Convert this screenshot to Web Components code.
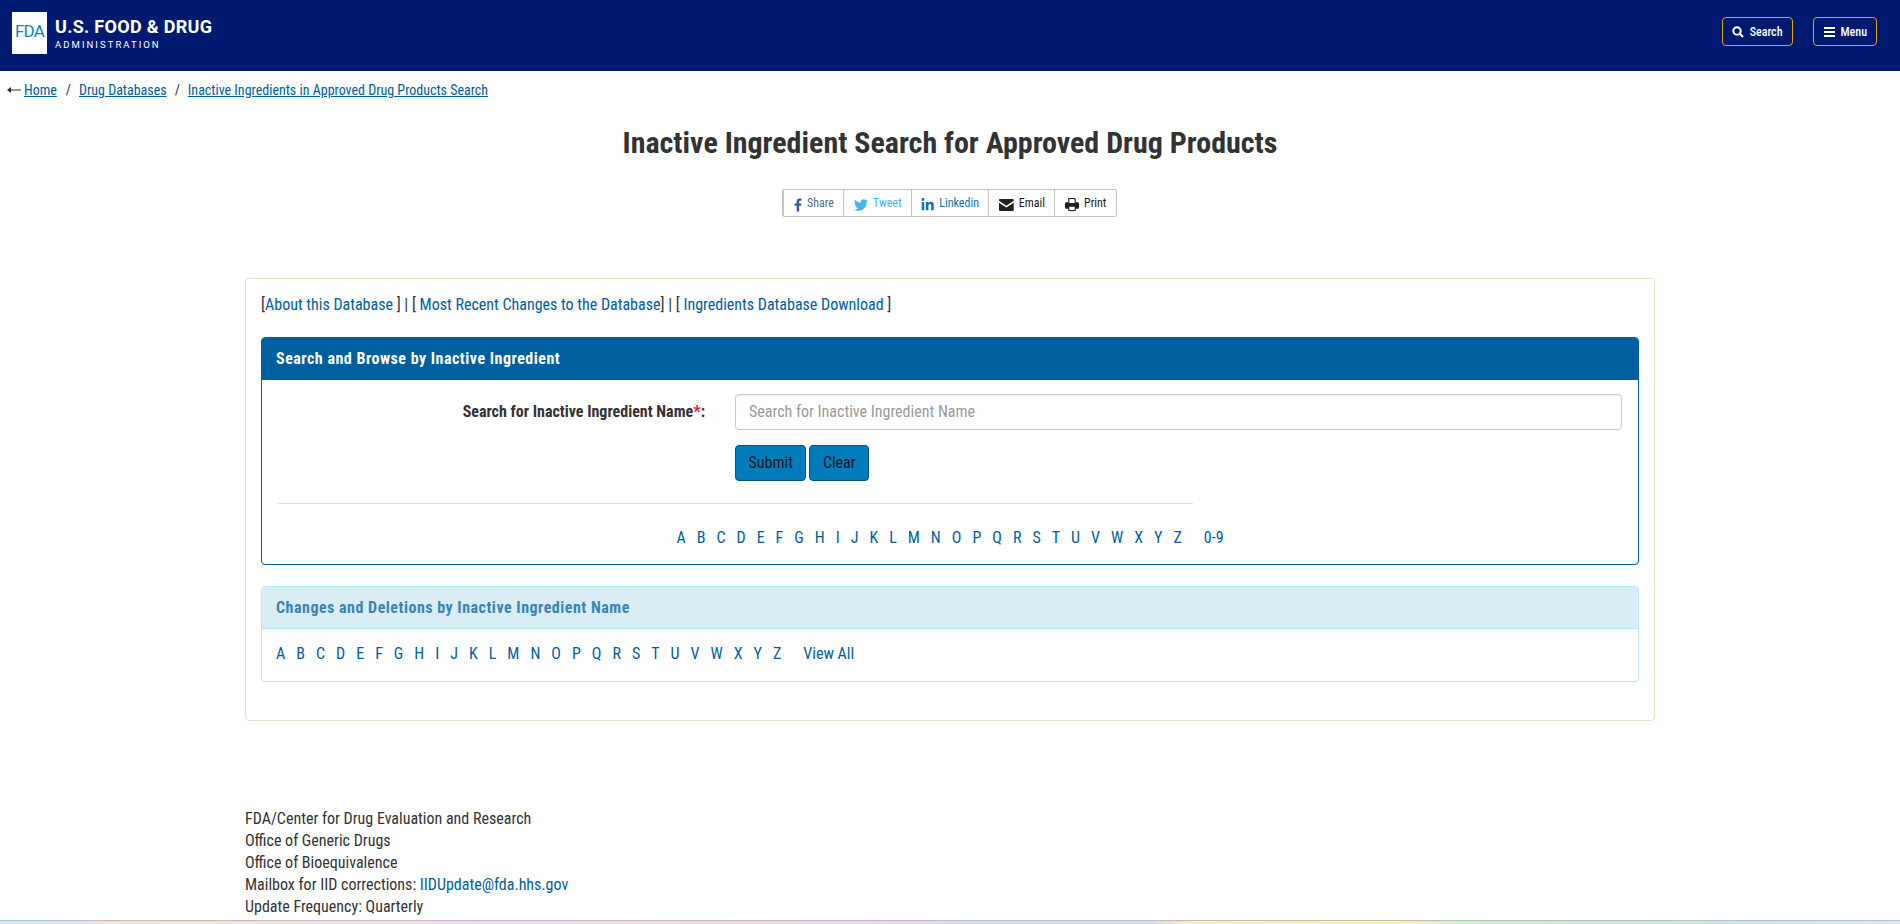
<!DOCTYPE html>
<html lang="en"><head><meta charset="utf-8"><title>Inactive Ingredient Search for Approved Drug Products</title>
<style>
  html, body { margin: 0; padding: 0; }
  body {
    background: #fff;
    color: #333;
    font: 16px/22px "Roboto Condensed", Roboto, "Liberation Sans", sans-serif;
    font-stretch: condensed;
    min-height: 100vh;
    display: flex;
    flex-direction: column;
    overflow: hidden;
  }
  rainbow-bar { margin-top: auto; }
</style>
</head><body>

<template id="fda-header-tpl">
  <style>
    :host { display: flex; justify-content: space-between; align-items: flex-start; height: 71px; background: #001a72; color: #fff; box-sizing: border-box; padding: 12px 23px 0 12px; }
    .brand { display: flex; gap: 8px; }
    .logo { width: 35px; height: 42px; background: #fff; display: flex; align-items: center; justify-content: center; color: #0a84c1; font: 400 17px/1 Roboto, sans-serif; letter-spacing: -.8px; padding: 0 0 4px 0; box-sizing: border-box; }
    .name { font: 700 18px/22px Roboto, sans-serif; letter-spacing: .3px; padding-top: 4px; white-space: nowrap; }
    .sub { font: 400 9.5px/12px Roboto, sans-serif; letter-spacing: 2.05px; margin-top: 1px; }
    .actions { display: flex; gap: 20px; padding-top: 5px; }
    .btn { display: flex; align-items: center; gap: 6px; height: 29px; box-sizing: border-box; border: 1px solid #dba80b; border-radius: 4px; padding: 0 9px 0 10px; font: 500 12px/1 "Roboto Condensed", Roboto, sans-serif; font-stretch: condensed; }
    .btn:first-child { padding-left: 9px; }
    svg { display: block; }
  </style>
  <div class="brand">
    <div class="logo">FDA</div>
    <div class="name">U.S. FOOD &amp; DRUG<div class="sub">ADMINISTRATION</div></div>
  </div>
  <div class="actions">
    <div class="btn"><svg width="12" height="12" viewBox="0 0 12 12" fill="none" stroke="#fff"><circle cx="5" cy="5" r="3.7" stroke-width="2"/><path d="M7.8 7.8 11 11" stroke-width="2.2"/></svg>Search</div>
    <div class="btn"><svg width="11" height="10" viewBox="0 0 11 10" fill="#fff"><rect width="11" height="2" y="0"/><rect width="11" height="2" y="4"/><rect width="11" height="2" y="8"/></svg>Menu</div>
  </div>
</template>

<template id="bread-crumbs-tpl">
  <style>
    :host { display: flex; align-items: center; height: 22px; padding: 8px 0 0 7px; font-size: 14px; color: #333; }
    a { color: #005ea2; text-decoration: underline; }
    .sep { margin: 0 8px; }
    .sep.first { margin-left: 9px; }
    svg { margin-right: 3px; }
  </style>
  <svg width="14" height="6" viewBox="0 0 14 6"><path d="M0 3 4 0v2.4h10v1.2H4V6z" fill="#3a2a25"/></svg>
  <a href="#">Home</a><span class="sep first">/</span>
  <a href="#">Drug Databases</a><span class="sep">/</span>
  <a href="#">Inactive Ingredients in Approved Drug Products Search</a>
</template>

<template id="share-bar-tpl">
  <style>
    :host { display: flex; width: max-content; margin: 30px 0 0 782px; height: 28px; box-sizing: border-box; border: 1px solid #c4c4c4; border-radius: 2px; font-size: 12px; line-height: 16px; }
    .item { display: flex; align-items: center; gap: 5px; padding: 0 9px 0; border-left: 1px solid #c4c4c4; box-sizing: border-box; }
    .item:first-child { border-left: 0; }
    svg { display: block; margin-top: 3px; }
    .fb { color: #56678f; width: 60px; padding-left: 10px; } .tw { color: #3db7ee; width: 68px; padding-left: 10px; } .li { color: #0a75b5; width: 77px; padding-left: 9px; } .em { width: 66px; padding-left: 10px; color: #212121; } .pr { width: 62px; padding-left: 10px; color: #212121; }
  </style>
  <div class="item fb"><svg width="9" height="14" viewBox="0 0 320 512"><path fill="#3b5998" d="M279.14 288l14.22-92.66h-88.91v-60.13c0-25.35 12.42-50.06 52.24-50.06h40.42V6.26S260.43 0 225.36 0c-73.22 0-121.08 44.38-121.08 124.72v70.62H22.89V288h81.39v224h100.17V288z"/></svg>Share</div>
  <div class="item tw"><svg width="14" height="14" viewBox="0 0 512 512"><path fill="#3db7ee" d="M459.37 151.716c.325 4.548.325 9.097.325 13.645 0 138.72-105.583 298.558-298.558 298.558-59.452 0-114.68-17.219-161.137-47.106 8.447.974 16.568 1.299 25.34 1.299 49.055 0 94.213-16.568 130.274-44.832-46.132-.975-84.792-31.188-98.112-72.772 6.498.974 12.995 1.624 19.818 1.624 9.421 0 18.843-1.3 27.614-3.573-48.081-9.747-84.143-51.98-84.143-102.985v-1.299c13.969 7.797 30.214 12.67 47.431 13.319-28.264-18.843-46.781-51.005-46.781-87.391 0-19.492 5.197-37.36 14.294-52.954 51.655 63.675 129.3 105.258 216.365 109.807-1.624-7.797-2.599-15.918-2.599-24.04 0-57.828 46.782-104.934 104.934-104.934 30.213 0 57.502 12.67 76.67 33.137 23.715-4.548 46.456-13.32 66.599-25.34-7.798 24.366-24.366 44.833-46.132 57.827 21.117-2.273 41.584-8.122 60.426-16.243-14.292 20.791-32.161 39.308-52.628 54.253z"/></svg>Tweet</div>
  <div class="item li"><svg width="14" height="14" viewBox="0 0 448 512"><path fill="#0a75b5" d="M100.28 448H7.4V148.9h92.88zM53.79 108.1C24.09 108.1 0 83.5 0 53.8a53.79 53.79 0 0 1 107.58 0c0 29.7-24.1 54.3-53.79 54.3zM447.9 448h-92.68V302.4c0-34.7-.7-79.2-48.29-79.2-48.29 0-55.69 37.7-55.69 76.7V448h-92.78V148.9h89.08v40.8h1.3c12.4-23.5 42.69-48.3 87.88-48.3 94 0 111.28 61.9 111.28 142.3V448z"/></svg>Linkedin</div>
  <div class="item em"><svg width="15" height="12" viewBox="0 0 15 12"><path fill="#212121" d="M1 0h13a1 1 0 0 1 1 1v.8L7.500 6.800 0 1.800V1a1 1 0 0 1 1-1zM0 3.600l7.500 5 7.500-5V11a1 1 0 0 1-1 1H1a1 1 0 0 1-1-1z"/></svg>Email</div>
  <div class="item pr"><svg width="14" height="13" viewBox="0 0 13 12"><path fill="#212121" d="M3 0h6l1 1v3h2a1 1 0 0 1 1 1v4a1 1 0 0 1-1 1h-2v2H3v-2H1a1 1 0 0 1-1-1V5a1 1 0 0 1 1-1h2zm1 1v3.500h5V1.500L8.500 1zM4 8v3h5V8z"/></svg>Print</div>
</template>

<template id="db-panel-tpl">
  <style>
    :host { display: block; border: 1px solid var(--border); border-radius: 4px; margin-top: var(--top, 21px); }
    .head { background: var(--head-bg); color: var(--head-fg); border-radius: 3px 3px 0 0; height: var(--head-h); line-height: var(--head-h); padding: 0 14px; font-weight: 700; font-size: 16px; letter-spacing: .5px; box-shadow: 0 1px 0 var(--border); }
    .body { padding: var(--pad, 15px 15px 15px); }
  </style>
  <div class="head"><slot name="title"></slot></div>
  <div class="body"><slot></slot></div>
</template>

<template id="alpha-list-tpl">
  <style>
    :host { display: flex; gap: 11px; white-space: nowrap; line-height: 22px; }
    :host([center]) { justify-content: center; }
    a { color: #005ea2; text-decoration: none; }
    .extra { margin-left: 11px; }
  </style>
</template>

<template id="search-form-tpl">
  <style>
    :host { display: block; }
    .row { display: grid; grid-template-columns: 428px 1fr; column-gap: 30px; padding-right: 1px; }
    label { font-weight: 700; text-align: right; line-height: 36px; white-space: nowrap; }
    label b { color: #e31c3d; }
    .input { box-sizing: border-box; height: 36px; border: 1px solid #ccc; border-radius: 4px; padding: 0 12px 0 13px; color: #999; line-height: 34px; box-shadow: inset 0 1px 1px rgba(0,0,0,.07); }
    .btns { grid-column: 2; display: flex; gap: 3px; margin-top: 15px; }
    .btn { height: 36px; box-sizing: border-box; border: 1px solid #00527f; border-radius: 4px; background: #007cba; color: #0a1626; padding: 0 12.5px; line-height: 34px; }
    hr { width: 916px; margin: 22px 0 23px; border: 0; border-top: 1px solid #ddd; }
  </style>
  <div class="row">
    <label>Search for Inactive Ingredient Name<b>*</b>:</label>
    <div class="input">Search for Inactive Ingredient Name</div>
    <div class="btns"><div class="btn">Submit</div><div class="btn">Clear</div></div>
  </div>
  <hr>
</template>

<template id="page-footer-tpl">
  <style>
    :host { display: block; margin: 87px 0 0 245px; line-height: 22px; }
    a { color: #005ea2; text-decoration: none; }
  </style>
  FDA/Center for Drug Evaluation and Research<br>
  Office of Generic Drugs<br>
  Office of Bioequivalence<br>
  Mailbox for IID corrections: <a href="#">IIDUpdate@fda.hhs.gov</a><br>
  Update Frequency: Quarterly
</template>

<template id="rainbow-bar-tpl">
  <style>
    :host { display: block; height: 3px; border-top: 1px solid #bdbdc4; background: linear-gradient(90deg, #d6e5f9 0, #d9e6f7 70px, #fbe2d8 115px, #f6e3d8 230px, #f1dfef 450px, #f9d7e1 700px, #eed9e8 860px, #d2dcf1 1000px, #d4dbf0 1150px, #f9f2a8 1190px, #fcf39b 1400px, #c9f0d9 1490px, #bfece2 1720px, #d8ecf5 1900px); }
  </style>
</template>

<fda-header></fda-header>
<bread-crumbs></bread-crumbs>
<page-title></page-title>
<share-bar></share-bar>
<db-card></db-card>
<page-footer></page-footer>
<rainbow-bar></rainbow-bar>

<script>
  // stamps a <template> into an open shadow root
  class TplElement extends HTMLElement {
    constructor(tplId) {
      super();
      this.attachShadow({mode: 'open'});
      this.shadowRoot.appendChild(document.getElementById(tplId).content.cloneNode(true));
    }
  }

  class FdaHeader extends TplElement { constructor() { super('fda-header-tpl'); } }
  class BreadCrumbs extends TplElement { constructor() { super('bread-crumbs-tpl'); } }
  class ShareBar extends TplElement { constructor() { super('share-bar-tpl'); } }
  class DbPanel extends TplElement { constructor() { super('db-panel-tpl'); } }
  class SearchForm extends TplElement { constructor() { super('search-form-tpl'); } }
  class PageFooter extends TplElement { constructor() { super('page-footer-tpl'); } }
  class RainbowBar extends TplElement { constructor() { super('rainbow-bar-tpl'); } }

  class PageTitle extends HTMLElement {
    constructor() {
      super();
      this.attachShadow({mode: 'open'}).innerHTML = `
        <style>
          :host { display: block; }
          h1 { margin: 24px 0 0; font-size: 30px; line-height: 36px; height: 34px; font-weight: 700; text-align: center; color: #333; }
        </style>
        <h1>Inactive Ingredient Search for Approved Drug Products</h1>`;
    }
  }

  class AlphaList extends TplElement {
    constructor() {
      super('alpha-list-tpl');
      for (const c of 'ABCDEFGHIJKLMNOPQRSTUVWXYZ') this.addLink(c);
    }
    connectedCallback() {
      if (this.extraDone) return;
      this.extraDone = true;
      this.addLink(this.getAttribute('extra'), 'extra');
    }
    addLink(text, cls) {
      const a = document.createElement('a');
      a.href = '#';
      a.textContent = text;
      if (cls) a.className = cls;
      this.shadowRoot.appendChild(a);
    }
  }

  class DbCard extends HTMLElement {
    constructor() {
      super();
      this.attachShadow({mode: 'open'}).innerHTML = `
        <style>
          :host { display: block; box-sizing: border-box; width: 1410px; margin: 61px 0 0 245px; border: 1px solid #d6e9c6; border-radius: 4px; padding: 15px 15px 38px; }
          a { color: #005ea2; text-decoration: none; }
          .primary { --border: #005ea2; --head-bg: #005f9e; --head-fg: #fff; --head-h: 41px; }
          .info { --border: #bce8f1; --head-bg: #d9edf7; --head-fg: #3a85ad; --head-h: 41px; --pad: 15px 14px 16px; --top: 21px; }
        </style>
        <div>[<a href="#">About this Database </a>] | [ <a href="#">Most Recent Changes to the Database</a>] | [ <a href="#">Ingredients Database Download </a>]</div>
        <db-panel class="primary">
          <span slot="title">Search and Browse by Inactive Ingredient</span>
          <search-form></search-form>
          <alpha-list center extra="0-9"></alpha-list>
        </db-panel>
        <db-panel class="info">
          <span slot="title">Changes and Deletions by Inactive Ingredient Name</span>
          <alpha-list extra="View All"></alpha-list>
        </db-panel>`;
    }
  }

  customElements.define('fda-header', FdaHeader);
  customElements.define('bread-crumbs', BreadCrumbs);
  customElements.define('page-title', PageTitle);
  customElements.define('share-bar', ShareBar);
  customElements.define('db-panel', DbPanel);
  customElements.define('search-form', SearchForm);
  customElements.define('alpha-list', AlphaList);
  customElements.define('db-card', DbCard);
  customElements.define('page-footer', PageFooter);
  customElements.define('rainbow-bar', RainbowBar);
</script>
</body></html>
